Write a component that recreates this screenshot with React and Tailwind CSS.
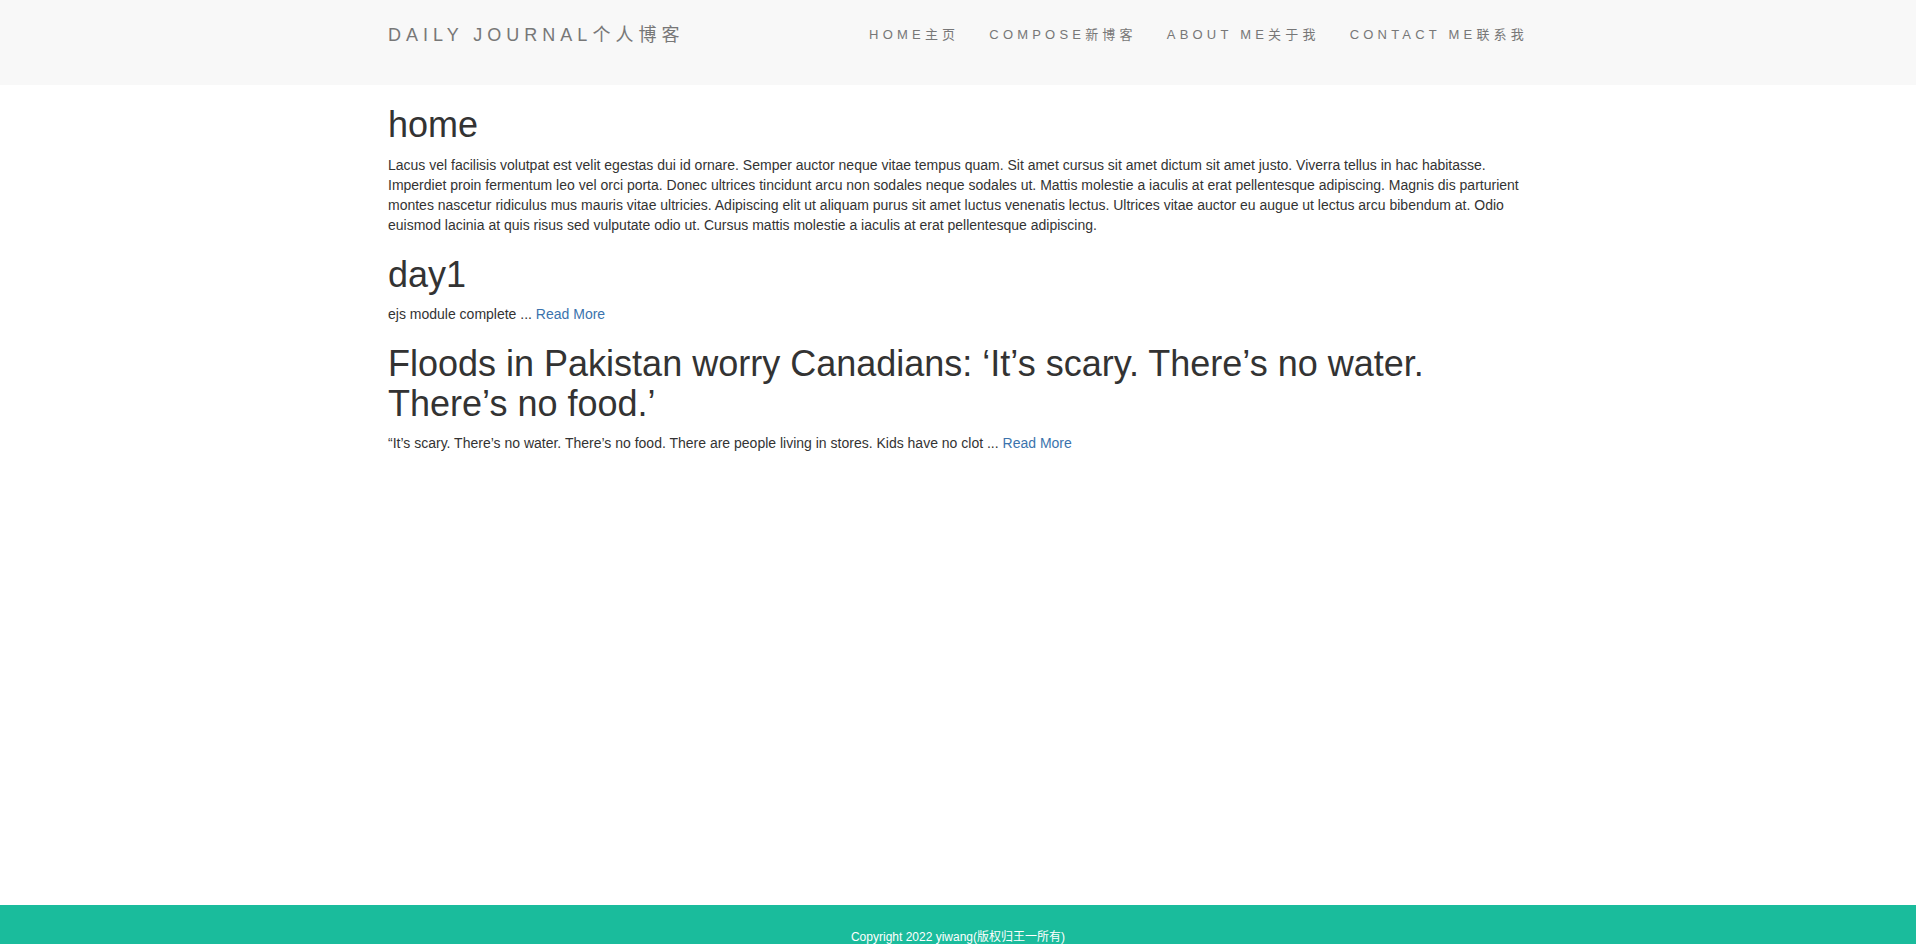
import React from "react";

const font = "font-['Liberation_Sans','Noto_Sans_CJK_SC',Arial,sans-serif]";

const navItems = ["HOME主页", "COMPOSE新博客", "ABOUT ME关于我", "CONTACT ME联系我"];

function ReadMore() {
  return (
    <a href="#" className="text-[#3b73ad] no-underline">
      Read More
    </a>
  );
}

export default function App() {
  return (
    <div className={`${font} h-screen overflow-hidden flex flex-col bg-white text-[#333] text-[14px] leading-[20px]`}>
      <header className="h-[85px] shrink-0 bg-[#f8f8f8]">
        <div className="w-[1170px] mx-auto px-[15px] pt-[25px] flex items-start justify-between">
          <a href="#" className="text-[18px] leading-[20px] tracking-[5px] text-[#777]">
            DAILY JOURNAL个人博客
          </a>
          <ul className="flex -mr-[15px]">
            {navItems.map((item) => (
              <li key={item}>
                <a href="#" className="block px-[15px] text-[13px] leading-[20px] tracking-[4.2px] text-[#777]">
                  {item}
                </a>
              </li>
            ))}
          </ul>
        </div>
      </header>

      <main className="h-[820px] shrink-0">
        <div className="w-[1170px] mx-auto px-[15px]">
          <h1 className="mt-[20px] mb-[10px] text-[36px] leading-[1.1] font-normal">home</h1>
          <p className="mb-[10px]">
            Lacus vel facilisis volutpat est velit egestas dui id ornare. Semper auctor neque vitae tempus quam. Sit amet cursus sit amet dictum sit amet justo. Viverra tellus in hac habitasse. Imperdiet proin fermentum leo vel orci porta. Donec ultrices tincidunt arcu non sodales neque sodales ut. Mattis molestie a iaculis at erat pellentesque adipiscing. Magnis dis parturient montes nascetur ridiculus mus mauris vitae ultricies. Adipiscing elit ut aliquam purus sit amet luctus venenatis lectus. Ultrices vitae auctor eu augue ut lectus arcu bibendum at. Odio euismod lacinia at quis risus sed vulputate odio ut. Cursus mattis molestie a iaculis at erat pellentesque adipiscing.
          </p>

          <h1 className="mt-[20px] mb-[10px] text-[36px] leading-[1.1] font-normal">day1</h1>
          <p className="mb-[10px]">
            ejs module complete ... <ReadMore />
          </p>

          <h1 className="mt-[20px] mb-[10px] text-[36px] leading-[1.1] font-normal">
            Floods in Pakistan worry Canadians: ‘It’s scary. There’s no water. There’s no food.’
          </h1>
          <p className="mb-[10px]">
            “It’s scary. There’s no water. There’s no food. There are people living in stores. Kids have no clot ... <ReadMore />
          </p>
        </div>
      </main>

      <footer className="shrink-0 bg-[#1abc9c] pt-[24px] pb-[24px] text-center text-white text-[12px] leading-[17px]">
        Copyright 2022 yiwang(版权归王一所有)
      </footer>
    </div>
  );
}
